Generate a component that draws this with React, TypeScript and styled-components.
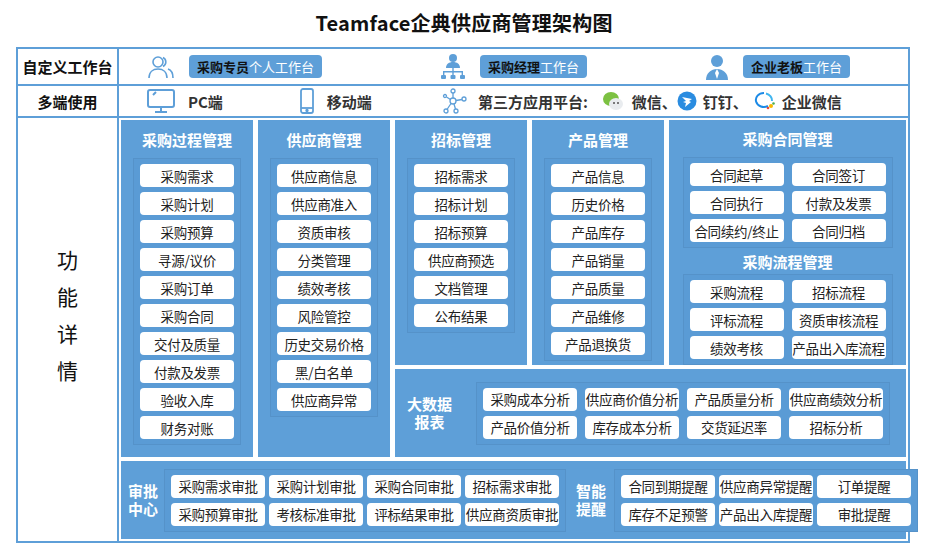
import React from "react";
import styled, { createGlobalStyle } from "styled-components";

const G = createGlobalStyle`
  body{margin:0;background:#fff;font-family:"Noto Sans CJK SC","Noto Sans",sans-serif;}
`;
const BLUE = "#5e9fd8";
const Page = styled.div`width:928px;height:557px;position:relative;`;
const Title = styled.div`text-align:center;font-size:20px;font-weight:700;color:#111;padding-top:8px;height:47px;box-sizing:border-box;letter-spacing:0.2px;`;
const Table = styled.div`
  margin-left:16px;width:894px;border:2px solid ${BLUE};box-sizing:border-box;
  display:grid;grid-template-columns:101px 1fr;grid-template-rows:37px 32px 423px;
`;
const Label = styled.div<{ big?: boolean }>`
  border-right:2px solid ${BLUE};border-bottom:${p => p.big ? "none" : `2px solid ${BLUE}`};
  display:flex;align-items:center;justify-content:center;font-weight:700;font-size:15px;color:#111;
  ${p => p.big ? "flex-direction:column;font-weight:400;font-size:21px;line-height:37px;padding-bottom:30px;" : ""}
`;
const Row = styled.div`border-bottom:2px solid ${BLUE};display:flex;align-items:center;`;
const Chip = styled.span`background:${BLUE};border-radius:4px;padding:2px 8px;font-size:13px;color:#fff;margin-left:14px;
  b{color:#111;font-weight:700;}`;
const Item = styled.div<{ ml?: number }>`display:flex;align-items:center;margin-left:${p => p.ml ?? 0}px;font-size:15px;font-weight:700;color:#333;`;
const Body = styled.div`
  padding:2px;display:grid;grid-template-columns:132px 132px 132px 132px 1fr;
  grid-template-rows:245px 88px 78px;gap:4px 5px;background:#fff;
`;
const Panel = styled.div<{ rows?: string }>`
  background:${BLUE};display:flex;flex-direction:column;align-items:center;
  grid-row:${p => p.rows ?? "auto"};
`;
const PH = styled.div<{ h?: number }>`color:#fff;font-weight:700;font-size:15px;height:${p => p.h ?? 38}px;display:flex;align-items:center;justify-content:center;`;
const Inner = styled.div<{ c?: number; gx?: number }>`
  border:1px solid #5592c9;background:#5a9bd5;padding:5px 6px;
  display:grid;grid-template-columns:repeat(${p => p.c ?? 1},auto);gap:5px ${p => p.gx ?? 8}px;
`;
const Btn = styled.div`
  background:#fff;border-radius:4px;width:94px;height:23px;display:flex;align-items:center;justify-content:center;
  font-size:13.5px;color:#222;white-space:nowrap;letter-spacing:-0.3px;
`;
const Side = styled.div<{ ml?: number; mr?: number }>`color:#fff;font-weight:700;font-size:15px;line-height:18px;white-space:nowrap;text-align:center;
  margin-left:${p => p.ml ?? 0}px;margin-right:${p => p.mr ?? 0}px;`;
const HRow = styled.div<{ span: string }>`background:${BLUE};display:flex;align-items:center;grid-column:${p => p.span};`;

const col1 = ["采购需求","采购计划","采购预算","寻源/议价","采购订单","采购合同","交付及质量","付款及发票","验收入库","财务对账"];
const col2 = ["供应商信息","供应商准入","资质审核","分类管理","绩效考核","风险管控","历史交易价格","黑/白名单","供应商异常"];
const col3 = ["招标需求","招标计划","招标预算","供应商预选","文档管理","公布结果"];
const col4 = ["产品信息","历史价格","产品库存","产品销量","产品质量","产品维修","产品退换货"];
const ht = ["合同起草","合同签订","合同执行","付款及发票","合同续约/终止","合同归档"];
const lc = ["采购流程","招标流程","评标流程","资质审核流程","绩效考核","产品出入库流程"];
const bd = ["采购成本分析","供应商价值分析","产品质量分析","供应商绩效分析","产品价值分析","库存成本分析","交货延迟率","招标分析"];
const sp = ["采购需求审批","采购计划审批","采购合同审批","招标需求审批","采购预算审批","考核标准审批","评标结果审批","供应商资质审批"];
const tx = ["合同到期提醒","供应商异常提醒","订单提醒","库存不足预警","产品出入库提醒","审批提醒"];

const Col = ({ t, items, rows }: { t: string; items: string[]; rows?: string }) => (
  <Panel rows={rows}><PH>{t}</PH><Inner>{items.map(i => <Btn key={i}>{i}</Btn>)}</Inner></Panel>
);

export default function App() {
  return (
    <Page>
      <G />
      <Title>Teamface企典供应商管理架构图</Title>
      <Table>
        <Label>自定义工作台</Label>
        <Row>
          <svg width="28" height="28" viewBox="0 0 28 28" style={{ marginLeft: 28 }} fill="none" stroke={BLUE} strokeWidth="1.6">
            <circle cx="11" cy="9" r="5" /><path d="M2 25c0-6 4-9 9-9s9 3 9 9" /><path d="M16 4.5a5 5 0 0 1 0 9M21 16c3 1 5 4 5 9" />
          </svg>
          <Chip><b>采购专员</b>个人工作台</Chip>
          <svg width="26" height="28" viewBox="0 0 26 28" style={{ marginLeft: 118 }} fill={BLUE}>
            <circle cx="13" cy="5" r="4" /><path d="M6 15c0-4 3-6 7-6s7 2 7 6z" /><path d="M12.3 15h1.4v3h-1.4zM3 18h20v1.4H3zM3 18h1.4v4H3zM21.6 18H23v4h-1.4zM12.3 18h1.4v4h-1.4z" />
            <rect x="1" y="22" width="5" height="4" rx="1" /><rect x="10.5" y="22" width="5" height="4" rx="1" /><rect x="20" y="22" width="5" height="4" rx="1" />
          </svg>
          <Chip><b>采购经理</b>工作台</Chip>
          <svg width="24" height="26" viewBox="0 0 24 26" style={{ marginLeft: 118 }} fill={BLUE}>
            <circle cx="12" cy="7" r="6" /><path d="M1 26c0-7 5-11 11-11s11 4 11 11z" /><path d="M12 15l-2 4 2 6 2-6z" fill="#fff" />
          </svg>
          <Chip><b>企业老板</b>工作台</Chip>
        </Row>
        <Label>多端使用</Label>
        <Row>
          <svg width="30" height="26" viewBox="0 0 30 26" style={{ marginLeft: 27 }} fill="none" stroke={BLUE} strokeWidth="2">
            <rect x="2" y="2" width="26" height="17" rx="2" /><path d="M15 19v4M9 24h12M7 7l3-3" />
          </svg>
          <Item ml={12}>PC端</Item>
          <svg width="16" height="26" viewBox="0 0 16 26" style={{ marginLeft: 76 }} fill="none" stroke={BLUE} strokeWidth="1.8">
            <rect x="2" y="1" width="12" height="24" rx="2" /><path d="M2 20h12" /><circle cx="8" cy="22.5" r="0.8" fill={BLUE} />
          </svg>
          <Item ml={12}>移动端</Item>
          <svg width="26" height="26" viewBox="0 0 26 26" style={{ marginLeft: 70 }} fill="none" stroke={BLUE} strokeWidth="1.3">
            <circle cx="11" cy="13" r="3" /><circle cx="11" cy="3" r="2" /><circle cx="22" cy="11" r="2" /><circle cx="4" cy="23" r="2" /><circle cx="14" cy="23" r="2" /><circle cx="3" cy="8" r="1.5" />
            <path d="M11 5v5M14 12.5l6-1M9 15.5l-4 6M12 16l1.5 5M8.5 11.5l-4-2.5" />
          </svg>
          <Item ml={10}>第三方应用平台:</Item>
          <svg width="22" height="20" viewBox="0 0 22 20" style={{ marginLeft: 14 }}>
            <ellipse cx="9" cy="8" rx="8" ry="7" fill="#7cc142" /><ellipse cx="14" cy="13" rx="7" ry="6" fill="#e9ecef" />
            <circle cx="12" cy="12" r="1" fill="#555" /><circle cx="16" cy="12" r="1" fill="#555" />
          </svg>
          <Item ml={8}>微信、</Item>
          <svg width="20" height="20" viewBox="0 0 20 20"><circle cx="10" cy="10" r="9.5" fill="#2a8ce0" /><path d="M5 6l10 2-3 2 2 1-6 5 1-4-3-1 3-1z" fill="#fff" /></svg>
          <Item ml={6}>钉钉、</Item>
          <svg width="22" height="20" viewBox="0 0 22 20" style={{ marginLeft: 6 }} fill="none">
            <path d="M10 2a8 7 0 1 0 4 13" stroke="#1c8ae6" strokeWidth="2" /><path d="M18 10a8 7 0 0 0-6-7.5" stroke="#3fb5ef" strokeWidth="2" />
            <circle cx="17" cy="15" r="2" fill="#f9b700" /><circle cx="14" cy="17" r="1.3" fill="#e74c3c" /><circle cx="19.5" cy="12.5" r="1.3" fill="#4caf50" />
          </svg>
          <Item ml={6}>企业微信</Item>
        </Row>
        <Label big>功<br />能<br />详<br />情</Label>
        <Body>
          <Col rows="1 / 3" t="采购过程管理" items={col1} />
          <Col rows="1 / 3" t="供应商管理" items={col2} />
          <Col t="招标管理" items={col3} />
          <Col t="产品管理" items={col4} />
          <Panel>
            <PH>采购合同管理</PH>
            <Inner c={2}>{ht.map(i => <Btn key={i}>{i}</Btn>)}</Inner>
            <PH h={26}>采购流程管理</PH>
            <Inner c={2}>{lc.map(i => <Btn key={i}>{i}</Btn>)}</Inner>
          </Panel>
          <HRow span="3 / 6">
            <Side ml={12} mr={24}>大数据<br />报表</Side>
            <Inner c={4} gx={8}>{bd.map(i => <Btn key={i}>{i}</Btn>)}</Inner>
          </HRow>
          <HRow span="1 / 6">
            <Side ml={7} mr={6}>审批<br />中心</Side>
            <Inner c={4} gx={4}>{sp.map(i => <Btn key={i}>{i}</Btn>)}</Inner>
            <Side ml={10} mr={8}>智能<br />提醒</Side>
            <Inner c={3} gx={4}>{tx.map(i => <Btn key={i}>{i}</Btn>)}</Inner>
          </HRow>
        </Body>
      </Table>
    </Page>
  );
}
